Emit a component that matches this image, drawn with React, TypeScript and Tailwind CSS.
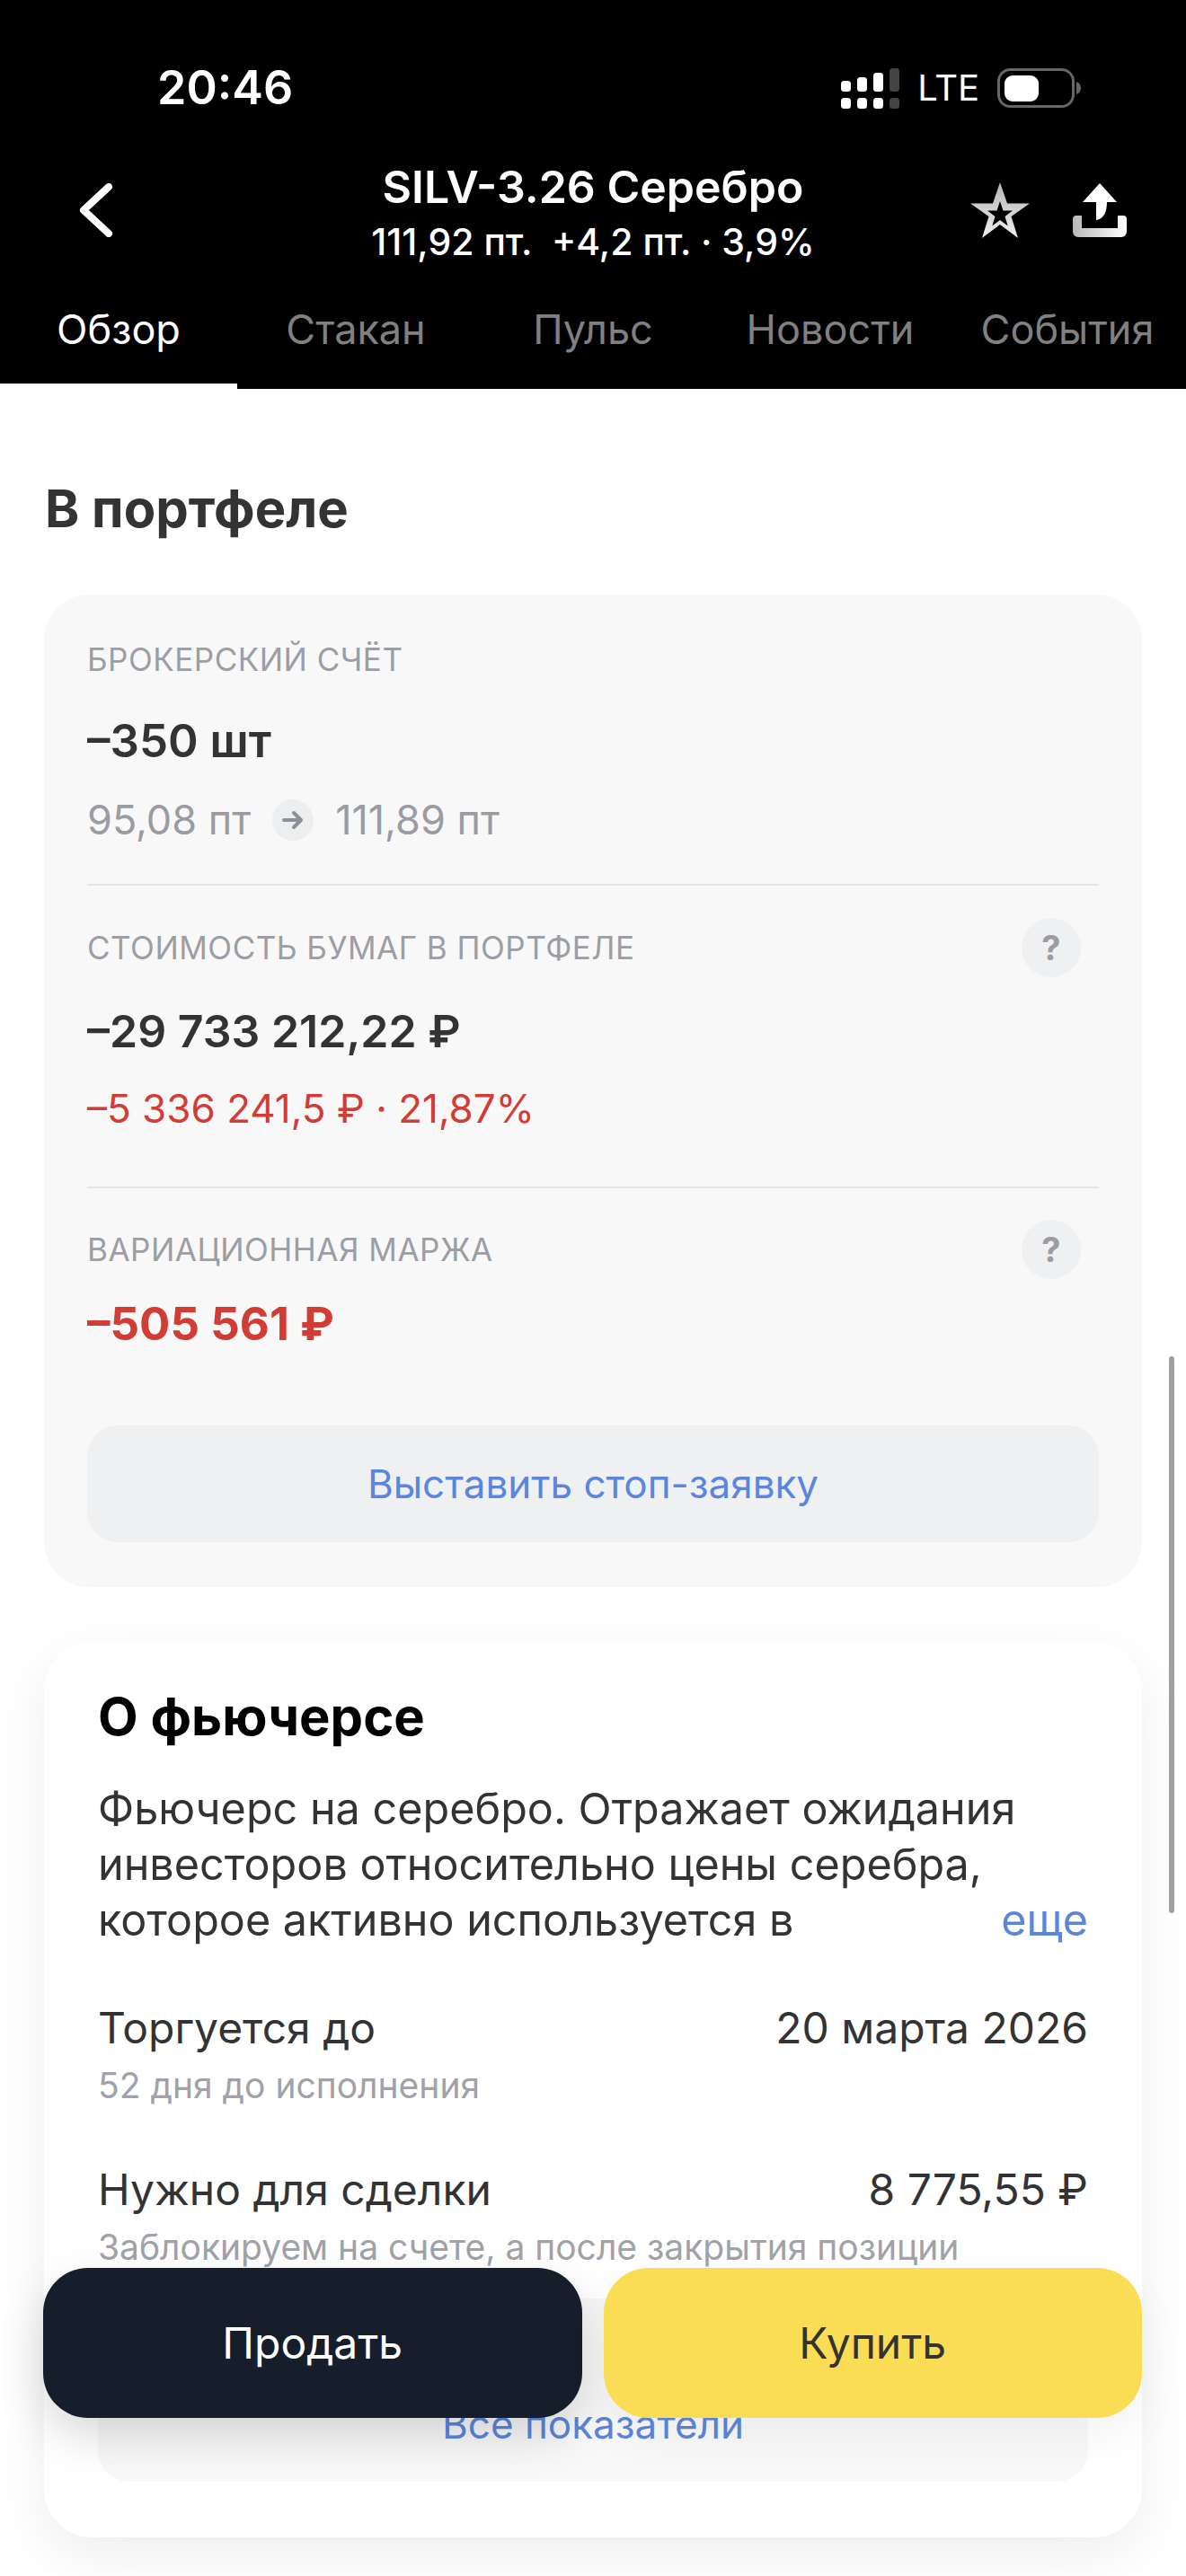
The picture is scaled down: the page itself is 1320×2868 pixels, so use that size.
import type { ReactNode } from "react"

const tabs = ["Обзор", "Стакан", "Пульс", "Новости", "События"]

function SignalIcon() {
  const cols = [
    { x: 0, top: 14, color: "#ffffff" },
    { x: 18, top: 10, color: "#ffffff" },
    { x: 36, top: 5, color: "#ffffff" },
    { x: 54, top: 0, color: "#444444" },
  ]
  return (
    <svg width="65" height="45" viewBox="0 0 65 45">
      {cols.map((c) => (
        <g key={c.x} fill={c.color}>
          <rect x={c.x} y={c.top} width="11" height={26 - c.top} rx="3.5" />
          <rect x={c.x} y="33" width="11" height="12" rx="3.5" />
        </g>
      ))}
    </svg>
  )
}

function BatteryIcon() {
  return (
    <svg width="94" height="44" viewBox="0 0 94 44">
      <rect x="1.5" y="1.5" width="83" height="41" rx="13" fill="none" stroke="#666666" strokeWidth="3" />
      <rect x="8" y="8" width="38" height="29" rx="9" fill="#ffffff" />
      <path d="M88 15c3 1 5 3.500 5 7s-2 6-5 7z" fill="#666666" />
    </svg>
  )
}

function StarIcon() {
  return (
    <svg width="66" height="62" viewBox="0 0 66 62">
      <defs>
        <linearGradient id="star-fill" x1="0" y1="0" x2="0" y2="1">
          <stop offset="0" stopColor="#b4b4b4" />
          <stop offset="1" stopColor="#f0f0f0" />
        </linearGradient>
      </defs>
      <path
        fillRule="evenodd"
        d="M33 0l8 23.500h25L45.500 38l7.500 24-20-15-20 15 7.500-24L0 23.500h25zM33 21l-3.500 10.500H19l8.500 6.500-3.200 10.500 8.700-6.500 8.700 6.500-3.200-10.500 8.500-6.500H36.500z"
        fill="url(#star-fill)"
      />
    </svg>
  )
}

function ShareIcon() {
  return (
    <svg width="60" height="60" viewBox="0 0 60 60">
      <defs>
        <linearGradient id="tray-fill" x1="0" y1="0" x2="1" y2="0">
          <stop offset="0" stopColor="#b8b8b8" />
          <stop offset="1" stopColor="#ffffff" />
        </linearGradient>
      </defs>
      <path d="M30 0l19 21H38c0 10-3 19-12 20v-20H11z" fill="#ffffff" />
      <path
        d="M0 40a4 4 0 0 1 4-4h5a1 1 0 0 1 1 1v13h40V37a1 1 0 0 1 1-1h5a4 4 0 0 1 4 4v14a6 6 0 0 1-6 6H6a6 6 0 0 1-6-6z"
        fill="url(#tray-fill)"
      />
    </svg>
  )
}

function HelpBadge() {
  return (
    <div className="flex h-[66px] w-[66px] items-center justify-center rounded-full bg-[#eef0f2] text-[38px] font-bold text-[#9a9da3]">
      ?
    </div>
  )
}

function Caption({ children, help }: { children: ReactNode; help?: boolean }) {
  return (
    <div className="flex h-[66px] items-center justify-between pr-[20px]">
      <span className="text-[35px] tracking-[0.5px] text-[#9b9ea4] uppercase">{children}</span>
      {help && <HelpBadge />}
    </div>
  )
}

function InfoRow({ label, value, note }: { label: string; value: string; note: string }) {
  return (
    <div className="flex flex-col">
      <div className="flex h-[56px] items-center justify-between text-[48px] text-[#333333]">
        <span>{label}</span>
        <span>{value}</span>
      </div>
      <div className="mt-[8px] flex h-[56px] items-center text-[39px] whitespace-nowrap text-[#a0a2a7]">{note}</div>
    </div>
  )
}

export default function App() {
  return (
    <div className="relative h-[2868px] w-[1320px] overflow-hidden bg-white [font-family:Inter,sans-serif]">
      <header className="flex h-[433px] flex-col bg-black text-white">
        <div className="mt-[62px] flex h-[72px] items-center justify-between pr-[116px] pl-[175px]">
          <span className="text-[52px] font-semibold">20:46</span>
          <div className="flex items-center gap-[20px]">
            <SignalIcon />
            <span className="text-[40px] font-normal">LTE</span>
            <BatteryIcon />
          </div>
        </div>
        <div className="mt-[34px] grid h-[130px] grid-cols-[1fr_auto_1fr] items-center px-[66px]">
          <svg className="ml-[22px]" width="38" height="60" viewBox="0 0 38 60" fill="none">
            <path d="M33 4L5 30l28 26" stroke="#ffffff" strokeWidth="8" strokeLinecap="round" strokeLinejoin="round" />
          </svg>
          <div className="flex flex-col items-center pt-[10px]">
            <span className="text-[50px] leading-[60px] font-semibold">SILV-3.26 Серебро</span>
            <span className="text-[41px] leading-[62px] font-medium whitespace-pre">111,92 пт.  +4,2 пт. · 3,9%</span>
          </div>
          <div className="flex items-center justify-end gap-[48px]">
            <StarIcon />
            <ShareIcon />
          </div>
        </div>
        <nav className="mt-auto grid h-[105px] grid-cols-5">
          {tabs.map((tab, i) => (
            <div
              key={tab}
              className={
                i === 0
                  ? "flex items-center justify-center border-b-[6px] border-white pb-[22px] text-[45px] text-white"
                  : "flex items-center justify-center border-b-[6px] border-black pb-[22px] text-[45px] text-[#808080]"
              }
            >
              {tab}
            </div>
          ))}
        </nav>
      </header>

      <main className="flex flex-col pr-[49px] pl-[49px]">
        <h2 className="mt-[100px] ml-[1px] text-[58px] leading-[66px] font-bold text-[#333333]">В портфеле</h2>

        <section className="mt-[63px] flex h-[1105px] flex-col rounded-[50px] bg-[#f8f8f9] px-[48px] pt-[39px]">
          <Caption>Брокерский счёт</Caption>
          <div className="mt-[28px] text-[51px] leading-[60px] font-semibold text-[#333333]">–350 шт</div>
          <div className="mt-[28px] flex h-[60px] items-center text-[45px] text-[#9a9ca1]">
            <span>95,08 пт</span>
            <span className="mx-[24px] flex h-[46px] w-[46px] items-center justify-center rounded-full bg-[#eceef0]">
              <svg width="24" height="22" viewBox="0 0 24 22" fill="none">
                <path d="M2 11h19M13 3l8 8-8 8" stroke="#8d9096" strokeWidth="4" strokeLinecap="round" strokeLinejoin="round" />
              </svg>
            </span>
            <span>111,89 пт</span>
          </div>
          <div className="mt-[41px] h-[2px] bg-[#e4e5e7]" />

          <div className="mt-[36px]">
            <Caption help>Стоимость бумаг в портфеле</Caption>
          </div>
          <div className="mt-[30px] text-[50px] leading-[60px] font-semibold text-[#333333]">–29 733 212,22 ₽</div>
          <div className="mt-[26px] text-[44px] leading-[60px] text-[#d13c35]">–5 336 241,5 ₽ · 21,87%</div>
          <div className="mt-[57px] h-[2px] bg-[#e4e5e7]" />

          <div className="mt-[35px]">
            <Caption help>Вариационная маржа</Caption>
          </div>
          <div className="mt-[17px] text-[51px] leading-[66px] font-bold text-[#d13c35]">–505 561 ₽</div>
          <button className="mt-[80px] h-[130px] rounded-[34px] bg-[#eff0f2] text-[44px] text-[#5b86dc]">
            Выставить стоп-заявку
          </button>
        </section>

        <section className="mt-[60px] flex h-[998px] flex-col rounded-[54px] bg-white px-[60px] pt-[50px] shadow-[0_20px_60px_rgba(0,0,0,0.07)]">
          <h3 className="text-[58px] leading-[68px] font-bold text-black">О фьючерсе</h3>
          <div className="relative mt-[38px] text-[48.5px] leading-[62px] text-[#333333]">
            <p>
              Фьючерс на серебро. Отражает ожидания
              <br />
              инвесторов относительно цены серебра,
              <br />
              которое активно используется в
            </p>
            <span className="absolute right-0 bottom-0 text-[#5b86dc]">еще</span>
          </div>
          <div className="mt-[61px] flex flex-col gap-[60px]">
            <InfoRow label="Торгуется до" value="20 марта 2026" note="52 дня до исполнения" />
            <InfoRow label="Нужно для сделки" value="8 775,55 ₽" note="Заблокируем на счете, а после закрытия позиции" />
          </div>
          <button className="mt-[29px] h-[204px] shrink-0 rounded-[34px] bg-[#f8f8f9] pt-[76px] text-[44px] text-[#5b86dc]">
            Все показатели
          </button>
        </section>
      </main>

      {/* floating buy / sell buttons */}
      <div className="absolute top-[2525px] left-[48px] flex w-[1223px] gap-[24px]">
        <button className="h-[167px] flex-1 rounded-[50px] bg-[#161d2b] text-[48px] text-white shadow-[0_20px_50px_rgba(0,0,0,0.15)]">
          Продать
        </button>
        <button className="h-[167px] flex-1 rounded-[50px] bg-[#fadd55] text-[48px] text-[#333333] shadow-[0_20px_50px_rgba(0,0,0,0.05)]">
          Купить
        </button>
      </div>

      {/* scrollbar */}
      <div className="absolute top-[1510px] left-[1301px] h-[620px] w-[6px] rounded-full bg-[#a0a0a0]" />
    </div>
  )
}
